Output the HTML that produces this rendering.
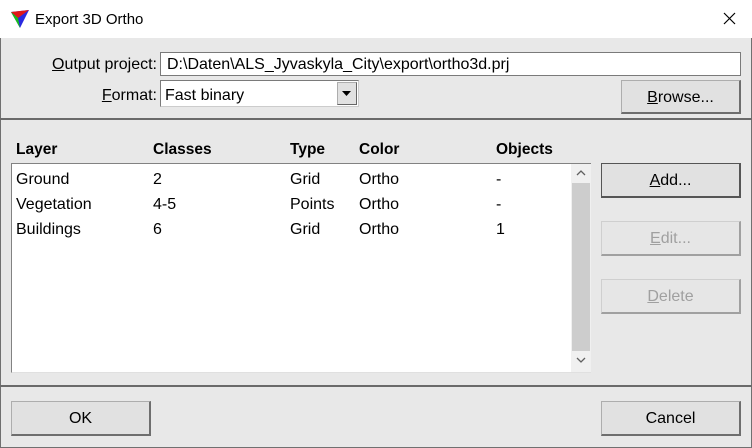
<!DOCTYPE html>
<html><head><meta charset="utf-8"><style>
*{box-sizing:border-box;margin:0;padding:0}
body{width:752px;height:448px;overflow:hidden;background:#e8e8e8;font-family:"Liberation Sans",sans-serif;font-size:16px;color:#000;position:relative}
.a{position:absolute;white-space:nowrap}
.win{position:absolute;left:0;top:0;width:752px;height:448px;border:1px solid #707070;border-top:1px solid #aaa}
.title{position:absolute;left:0;top:0;width:752px;height:38px;background:#fff}
.btn{position:absolute;background:#e1e1e1;border:1px solid #adadad;border-right:2px solid #6e6e6e;border-bottom:2px solid #6e6e6e;text-align:center;font-size:16px}
.dis{color:#a0a0a0;border-color:#cfcfcf;border-right-color:#a0a0a0;border-bottom-color:#a0a0a0;background:#e6e6e6}
.hdr{font-weight:bold;font-size:15.5px}
u{text-decoration:underline}
</style></head><body>
<div class="win"></div>
<div class="title"></div>
<svg class="a" style="left:10px;top:9px" width="20" height="20" viewBox="0 0 20 20">
<polygon points="1,3 19,1 10,19" fill="#2a2ae0"/>
<polygon points="1,3 19,1 8,9" fill="#e01818"/>
<polygon points="1,3 8,9 10,19" fill="#18c018"/>
</svg>
<div class="a" style="left:35px;top:11px;font-size:15px">Export 3D Ortho</div>
<svg class="a" style="left:723px;top:12px" width="13" height="13"><path d="M1 1L12 12M12 1L1 12" stroke="#000" stroke-width="1.2"/></svg>

<div class="a" style="right:595px;top:56px"><u>O</u>utput project:</div>
<div class="a" style="left:160px;top:52px;width:581px;height:24px;background:#fff;border:1px solid #7a7a7a;padding:3px 0 0 6px">D:\Daten\ALS_Jyvaskyla_City\export\ortho3d.prj</div>
<div class="a" style="right:595px;top:87px"><u>F</u>ormat:</div>
<div class="a" style="left:160px;top:80px;width:199px;height:27px;background:#fff;border:1px solid #7a7a7a;border-right-color:#ccc;border-bottom-color:#ccc;padding:6px 0 0 4px">Fast binary</div>
<div class="a" style="left:337px;top:82px;width:20px;height:23px;background:#e1e1e1;border:1px solid #adadad;border-right-color:#666;border-bottom-color:#666"></div>
<svg class="a" style="left:342px;top:91px" width="10" height="6"><polygon points="0,0 9,0 4.5,5" fill="#000"/></svg>
<div class="btn" style="left:621px;top:80px;width:120px;height:34px;line-height:33px"><u>B</u>rowse...</div>

<div class="a" style="left:0;top:118px;width:752px;height:2px;background:#6a6a6a"></div>

<div class="a hdr" style="left:16px;top:141px">Layer</div>
<div class="a hdr" style="left:153px;top:141px">Classes</div>
<div class="a hdr" style="left:290px;top:141px">Type</div>
<div class="a hdr" style="left:359px;top:141px">Color</div>
<div class="a hdr" style="left:496px;top:141px">Objects</div>

<div class="a" style="left:11px;top:163px;width:580px;height:210px;background:#fff;border:1px solid #828282;border-right:none;border-bottom-color:#e0e0e0"></div>
<div class="a" style="left:571px;top:164px;width:20px;height:208px;background:#f0f0f0"></div>
<div class="a" style="left:572px;top:183px;width:18px;height:168px;background:#cdcdcd"></div>
<svg class="a" style="left:576px;top:170px" width="10" height="7"><path d="M1 5L5 1L9 5" stroke="#606060" stroke-width="1.3" fill="none"/></svg>
<svg class="a" style="left:576px;top:357px" width="10" height="7"><path d="M1 1L5 5L9 1" stroke="#606060" stroke-width="1.3" fill="none"/></svg>

<div class="a" style="left:16px;top:171px">Ground</div>
<div class="a" style="left:153px;top:171px">2</div>
<div class="a" style="left:290px;top:171px">Grid</div>
<div class="a" style="left:359px;top:171px">Ortho</div>
<div class="a" style="left:496px;top:171px">-</div>
<div class="a" style="left:16px;top:196px">Vegetation</div>
<div class="a" style="left:153px;top:196px">4-5</div>
<div class="a" style="left:290px;top:196px">Points</div>
<div class="a" style="left:359px;top:196px">Ortho</div>
<div class="a" style="left:496px;top:196px">-</div>
<div class="a" style="left:16px;top:221px">Buildings</div>
<div class="a" style="left:153px;top:221px">6</div>
<div class="a" style="left:290px;top:221px">Grid</div>
<div class="a" style="left:359px;top:221px">Ortho</div>
<div class="a" style="left:496px;top:221px">1</div>

<div class="btn" style="left:601px;top:163px;width:140px;height:35px;line-height:34px;border:1px solid #555;border-right:2px solid #555;border-bottom:2px solid #555"><u>A</u>dd...</div>
<div class="btn dis" style="left:601px;top:221px;width:140px;height:35px;line-height:34px"><u>E</u>dit...</div>
<div class="btn dis" style="left:601px;top:279px;width:140px;height:35px;line-height:34px"><u>D</u>elete</div>

<div class="a" style="left:0;top:385px;width:752px;height:2px;background:#6a6a6a"></div>

<div class="btn" style="left:11px;top:401px;width:140px;height:35px;line-height:34px">OK</div>
<div class="btn" style="left:601px;top:401px;width:140px;height:35px;line-height:34px">Cancel</div>
</body></html>
